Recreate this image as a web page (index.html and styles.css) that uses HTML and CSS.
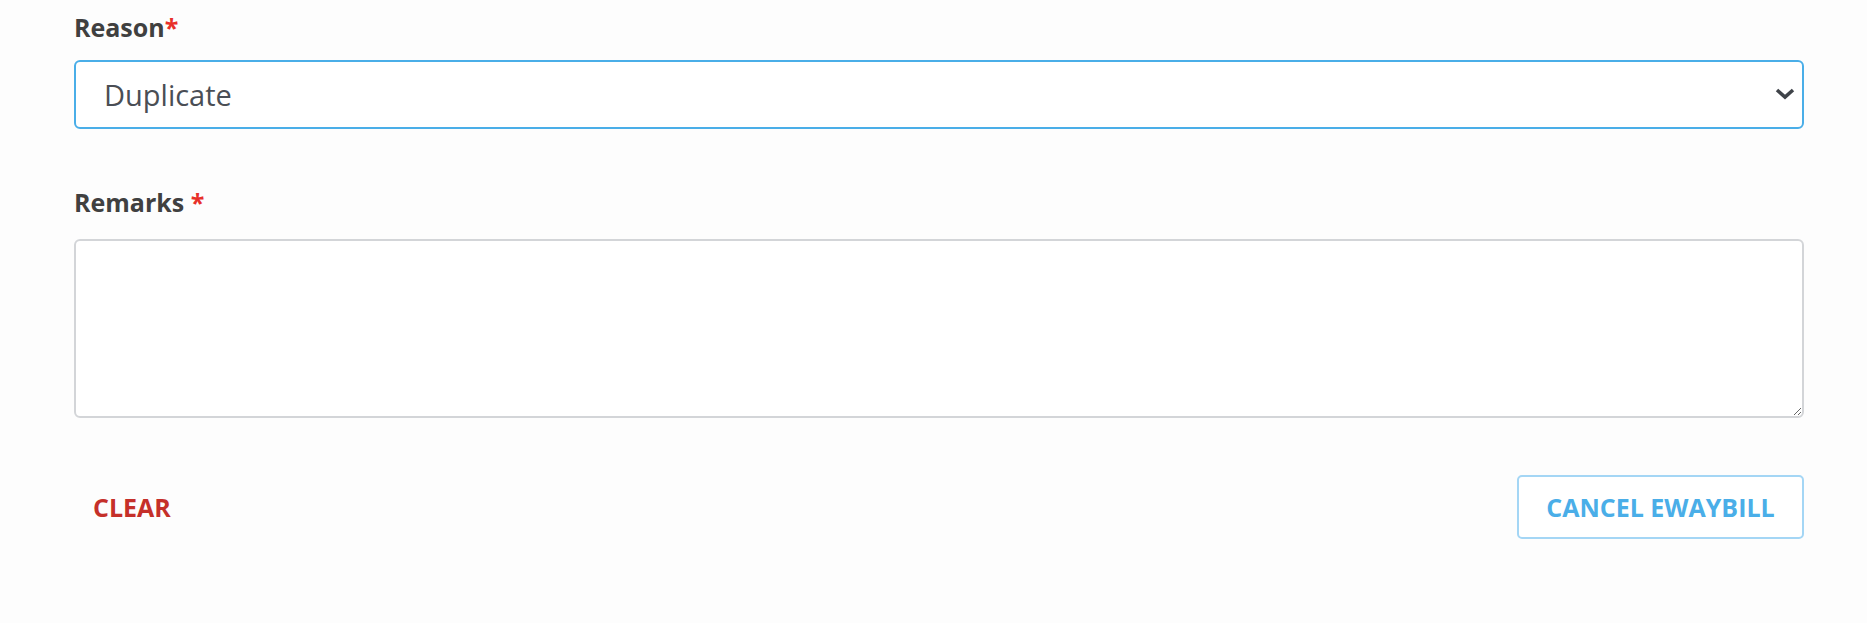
FILE: index.html
```html
<!DOCTYPE html>
<html lang="en">
<head>
    <meta charset="UTF-8" />
    <title>Cancel Eway Bill</title>
    <link rel="stylesheet" href="styles.css">
</head>
<body>
<form class="cancel-form">
    <div class="field">
        <label class="field-label" for="reason">Reason<span class="req">*</span></label>
        <div class="select-wrap">
            <select id="reason" class="field-select">
                <option>Duplicate</option>
                <option>Order Cancelled</option>
                <option>Data Entry Mistake</option>
                <option>Others</option>
            </select>
            <svg class="chevron" viewBox="0 0 20 12" width="20" height="12">
                <path d="M2 2 L10 9 L18 2" fill="none" stroke="#3f4349" stroke-width="3.6"/>
            </svg>
        </div>
    </div>
    <div class="field field-remarks">
        <label class="field-label" for="remarks">Remarks <span class="req">*</span></label>
        <textarea id="remarks" class="field-textarea"></textarea>
    </div>
    <div class="actions">
        <button type="reset" class="btn-clear">CLEAR</button>
        <button type="button" class="btn-cancel">CANCEL EWAYBILL</button>
    </div>
</form>
</body>
</html>
```

FILE: styles.css
```css
body {
    font-family: "Open Sans", sans-serif;
    background: #fdfdfd;
    margin: 0;
    padding: 0 63px 0 74px;
    color: #3b3b3b;
}
.cancel-form {
    padding-top: 12px;
}
.field-label {
    display: block;
    font-size: 25px;
    font-weight: 700;
    color: #404040;
    line-height: 30px;
    margin-bottom: 18px;
}
.req { color: #e8302a; }
.select-wrap {
    position: relative;
}
.field-select {
    appearance: none;
    -webkit-appearance: none;
    display: block;
    width: 100%;
    height: 69px;
    box-sizing: border-box;
    border: 2px solid #4aaee8;
    border-radius: 6px;
    background: #fff;
    padding: 0 28px;
    font-family: "Open Sans", sans-serif;
    font-size: 29px;
    color: #4a4e55;
    outline: none;
}
.chevron {
    position: absolute;
    right: 9px;
    top: 28px;
    pointer-events: none;
}
.field-remarks {
    margin-top: 58px;
}
.field-remarks .field-label {
    margin-bottom: 22px;
}
.field-textarea {
    display: block;
    width: 100%;
    height: 179px;
    box-sizing: border-box;
    border: 2px solid #d3d5d8;
    border-radius: 6px;
    background: #fff;
    font-family: "Open Sans", sans-serif;
    font-size: 22px;
    padding: 10px 20px;
    outline: none;
}
.actions {
    display: flex;
    justify-content: space-between;
    align-items: center;
    margin-top: 57px;
}
.btn-clear {
    background: none;
    border: none;
    padding: 0 19px;
    font-family: "Open Sans", sans-serif;
    font-size: 25px;
    font-weight: 700;
    color: #c5302a;
    cursor: pointer;
}
.btn-cancel {
    background: #fff;
    border: 2px solid #a4d6f5;
    border-radius: 5px;
    height: 64px;
    width: 287px;
    font-family: "Open Sans", sans-serif;
    font-size: 25px;
    font-weight: 700;
    color: #4aaee8;
    cursor: pointer;
}
```
